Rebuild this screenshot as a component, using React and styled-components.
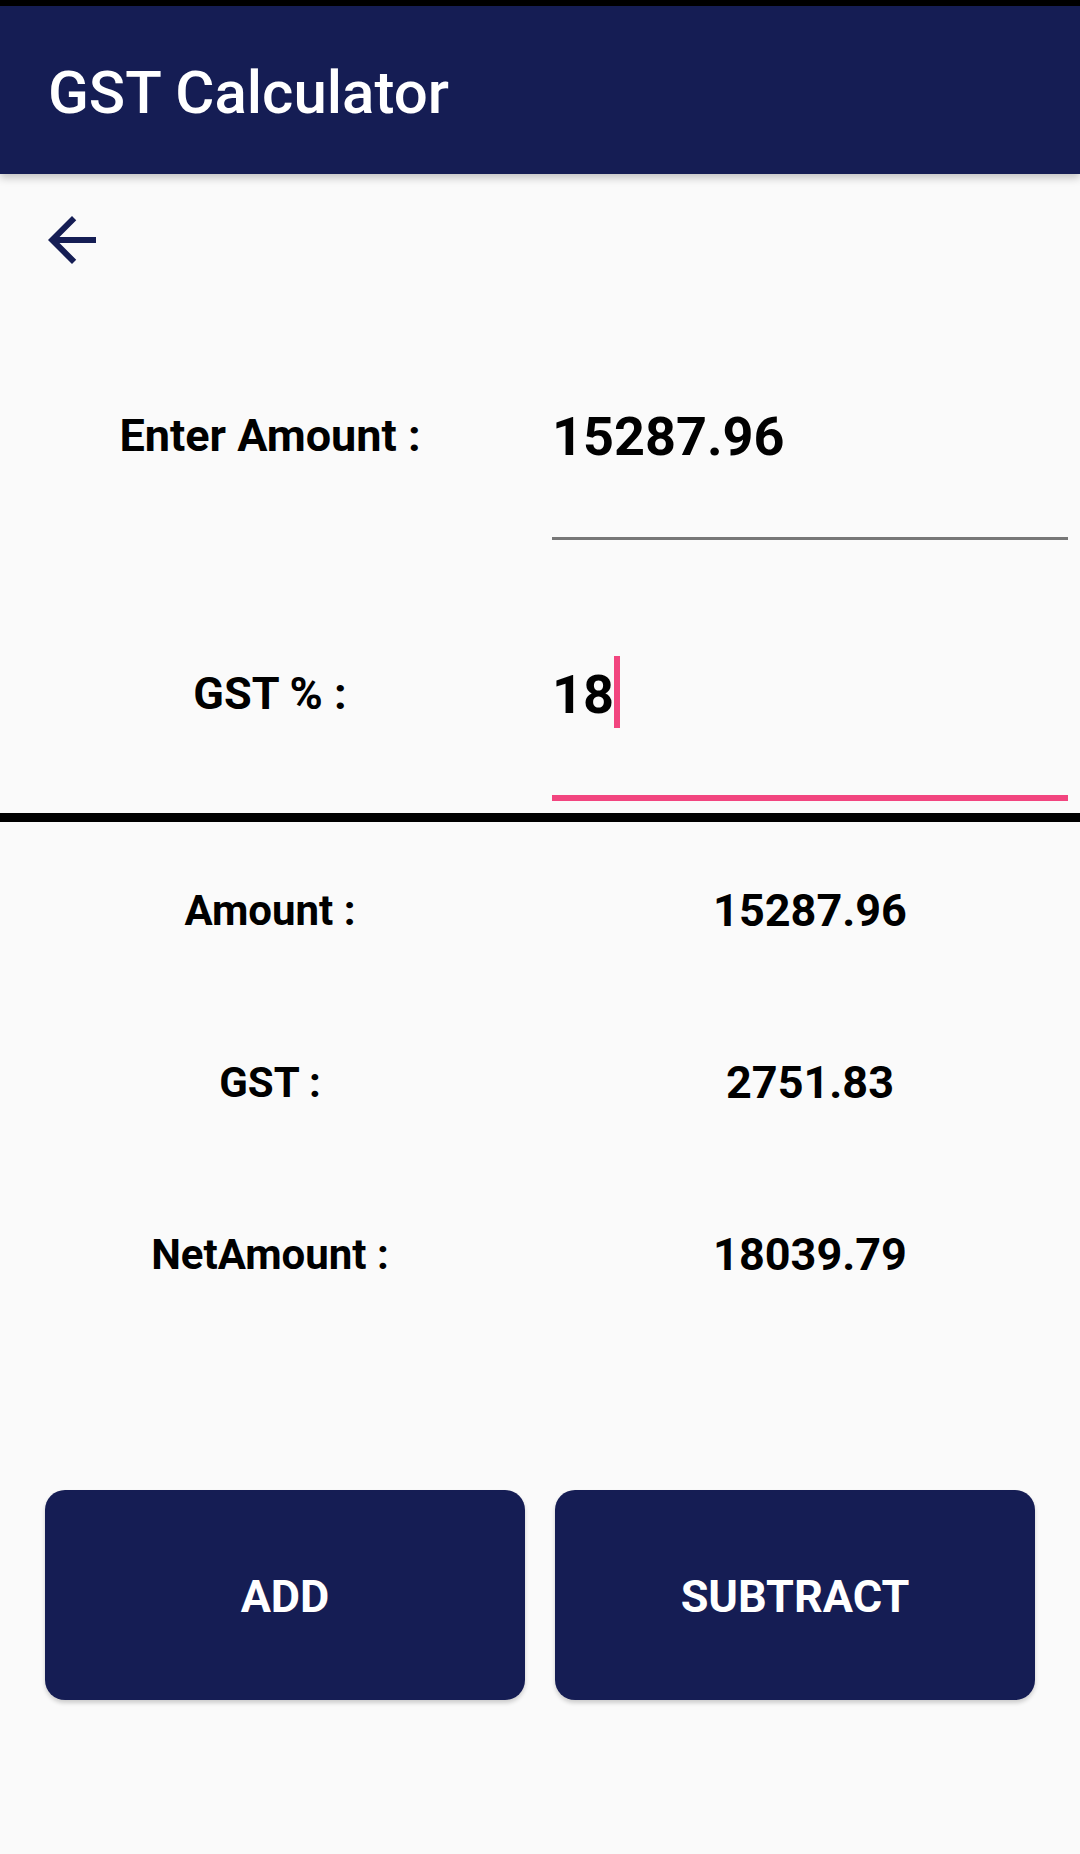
import React from 'react';
import styled, { createGlobalStyle } from 'styled-components';

const GlobalStyle = createGlobalStyle`
  html, body {
    margin: 0;
    padding: 0;
    background: #fafafa;
    font-family: Roboto, "Liberation Sans", sans-serif;
  }
`;

const navy = '#151d54';
const accent = '#f2457f';

const Screen = styled.div`
  width: 1080px;
  min-height: 1854px;
  background: #fafafa;
  display: flex;
  flex-direction: column;
`;

const StatusStrip = styled.div`
  height: 6px;
  background: #000;
`;

const AppBar = styled.header`
  height: 168px;
  box-sizing: border-box;
  padding: 6px 0 0 48px;
  background: ${navy};
  display: flex;
  align-items: center;
  box-shadow: 0 4px 8px rgba(0, 0, 0, 0.22);
  position: relative;
  z-index: 1;
`;

const Title = styled.h1`
  margin: 0;
  color: #fff;
  font-size: 60px;
  font-weight: 500;
  line-height: 1;
`;

const BackButton = styled.button`
  width: 72px;
  height: 72px;
  margin: 30px 0 0 36px;
  padding: 0;
  border: none;
  background: transparent;
  display: flex;
`;

const InputRow = styled.div`
  display: grid;
  grid-template-columns: 552px 516px;
  margin-top: ${(p) => p.$top}px;
`;

const Label = styled.div`
  width: 540px;
  text-align: center;
  font-size: 45px;
  font-weight: 700;
  line-height: 64px;
  color: #000;
`;

const Field = styled.div`
  padding-bottom: 69px;
  border-bottom: ${(p) => (p.$focused ? `6px solid ${accent}` : '3px solid #777')};
  display: flex;
  align-items: center;
  height: 64px;
  font-size: 54px;
  font-weight: 700;
  color: #000;
`;

const Caret = styled.span`
  display: inline-block;
  width: 6px;
  height: 72px;
  margin-top: -4px;
  background: ${accent};
`;

const Divider = styled.div`
  height: 9px;
  background: #000;
  margin-top: 12px;
`;

const Results = styled.div`
  display: flex;
  flex-direction: column;
  padding-top: 2px;
`;

const ResultRow = styled.div`
  display: grid;
  grid-template-columns: 540px 540px;
  height: 172px;
  align-items: center;
`;

const ResultLabel = styled.div`
  text-align: center;
  font-size: 42px;
  font-weight: 700;
  color: #000;
`;

const ResultValue = styled.div`
  text-align: center;
  font-size: 45px;
  font-weight: 700;
  color: #000;
`;

const Actions = styled.div`
  display: flex;
  gap: 30px;
  padding: 0 45px;
  margin-top: 150px;
`;

const ActionButton = styled.button`
  flex: 1;
  height: 210px;
  padding-top: 4px;
  border: none;
  border-radius: 20px;
  background: ${navy};
  color: #fff;
  font-family: Roboto, "Liberation Sans", sans-serif;
  font-size: 45px;
  font-weight: 700;
  text-transform: uppercase;
  box-shadow: 0 3px 4px rgba(0, 0, 0, 0.18);
`;

const results = [
  { label: 'Amount :', value: '15287.96' },
  { label: 'GST :', value: '2751.83' },
  { label: 'NetAmount :', value: '18039.79' },
];

function BackArrow() {
  return (
    <svg width="72" height="72" viewBox="0 0 24 24">
      <path fill={navy} d="M20 11H7.83l5.59-5.59L12 4l-8 8 8 8 1.41-1.41L7.83 13H20v-2z" />
    </svg>
  );
}

export default function App() {
  return (
    <Screen>
      <GlobalStyle />
      <StatusStrip />
      <AppBar>
        <Title>GST Calculator</Title>
      </AppBar>
      <BackButton aria-label="Back">
        <BackArrow />
      </BackButton>

      <InputRow $top={128}>
        <Label>Enter Amount :</Label>
        <Field>15287.96</Field>
      </InputRow>
      <InputRow $top={122}>
        <Label>GST % :</Label>
        <Field $focused>
          18
          <Caret />
        </Field>
      </InputRow>

      <Divider />

      <Results>
        {results.map((r) => (
          <ResultRow key={r.label}>
            <ResultLabel>{r.label}</ResultLabel>
            <ResultValue>{r.value}</ResultValue>
          </ResultRow>
        ))}
      </Results>

      <Actions>
        <ActionButton>Add</ActionButton>
        <ActionButton>Subtract</ActionButton>
      </Actions>
    </Screen>
  );
}
